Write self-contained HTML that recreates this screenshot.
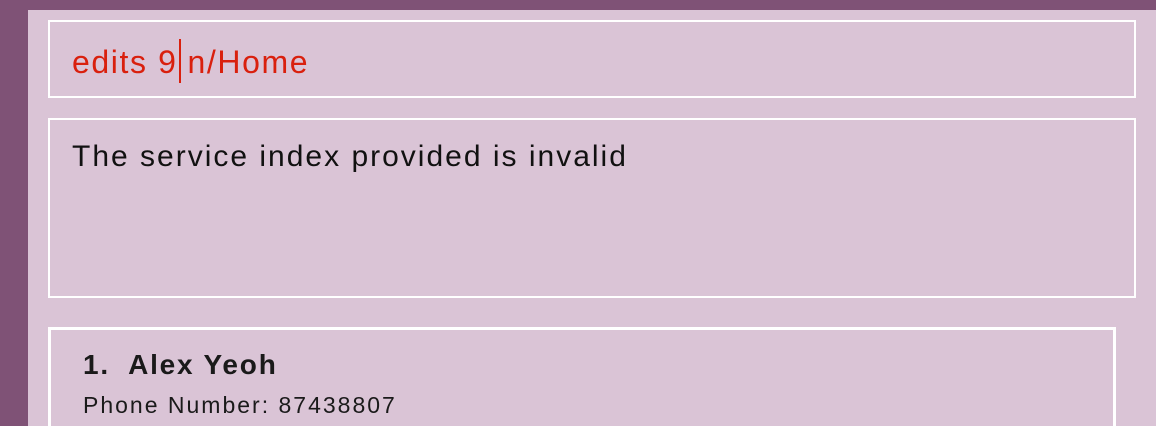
<!DOCTYPE html>
<html><head><style>
html,body{margin:0;width:1156px;height:426px;overflow:hidden}
body{background:#7f5276;font-family:"Liberation Sans",sans-serif;position:relative}
.main{position:absolute;left:28px;top:10px;width:1128px;height:416px;background:#dac4d6;overflow:hidden}
.box{position:absolute;border:2px solid #fff;box-sizing:border-box}
</style></head><body>
<div class="main">
<div class="box" style="left:20px;top:10px;width:1088px;height:78px"></div>
<div style="position:absolute;left:44px;top:29px;font-size:32px;letter-spacing:1.6px;color:#d9200e;line-height:40px;white-space:pre">edits 9<span style="display:inline-block;width:2px;height:44px;background:#d9200e;vertical-align:-10px;margin:0 6px 0 2px"></span>n/Home</div>
<div class="box" style="left:20px;top:108px;width:1088px;height:180px"></div>
<div style="position:absolute;left:44px;top:128px;font-size:30px;letter-spacing:2px;color:#111;line-height:38px">The service index provided is invalid</div>
<div class="box" style="left:20px;top:317px;width:1068px;height:99px;border-width:3px;border-bottom:none"></div>
<div style="position:absolute;left:55px;top:338px;font-size:28px;letter-spacing:1.8px;font-weight:bold;color:#1a1a1a;line-height:34px">1.&nbsp; Alex Yeoh</div>
<div style="position:absolute;left:55px;top:381px;font-size:23px;letter-spacing:2px;color:#1a1a1a;line-height:28px">Phone Number: 87438807</div>
</div>
</body></html>
